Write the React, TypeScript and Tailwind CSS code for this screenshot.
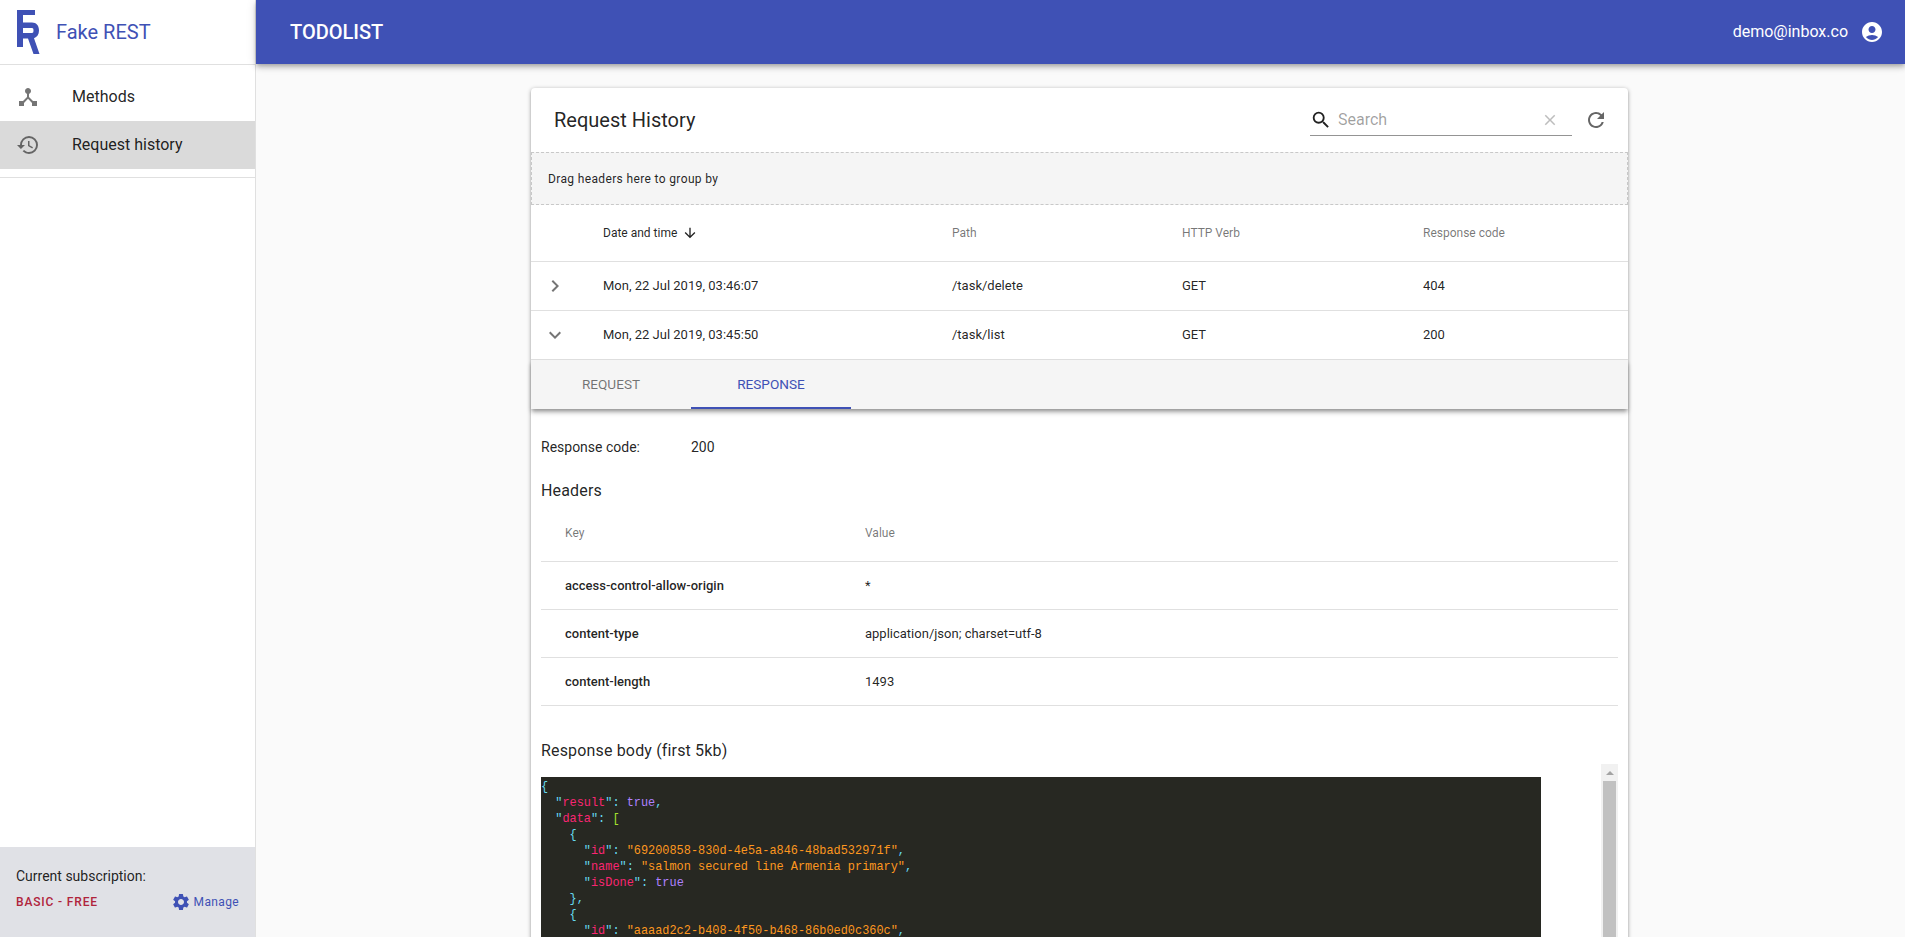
import {
  MdAccountCircle,
  MdArrowDownward,
  MdClose,
  MdDeviceHub,
  MdHistory,
  MdKeyboardArrowDown,
  MdKeyboardArrowRight,
  MdRefresh,
  MdSearch,
  MdSettings,
} from 'react-icons/md';

const gridCols = 'grid grid-cols-[72px_349px_230px_241px_1fr]';

function Logo() {
  return (
    <svg width="24" height="46" viewBox="0 0 24 46" className="shrink-0 text-[#3f51b5]" fill="currentColor">
      <path d="M1 1h18v5H7v32H1z" />
      <path d="M7 13.500h9c4.500 0 7 3.200 7 8 0 3.800-2 6.700-5 7.700L23.500 45h-6l-5.500-15.500H7v-5.500h9c1 0 1.500-.8 1.500-2.500S17 19 16 19H7z" />
    </svg>
  );
}

function Sidebar() {
  return (
    <aside className="flex h-full w-[256px] shrink-0 flex-col border-r border-[#e0e0e0] bg-white">
      <div className="flex h-[65px] items-center gap-[16px] border-b border-[#e0e0e0] pl-[16px]">
        <Logo />
        <span className="text-[20px] text-[#3f51b5]">Fake REST</span>
      </div>
      <nav className="mt-[7px] border-b border-[#e0e0e0] pb-[8px]">
        <div className="flex h-[49px] items-center">
          <MdDeviceHub className="ml-[16px] size-[24px] text-black/54" />
          <span className="ml-[32px] text-[16px] text-black/87">Methods</span>
        </div>
        <div className="flex h-[48px] items-center bg-[#dadada]">
          <MdHistory className="ml-[16px] size-[24px] text-black/54" />
          <span className="ml-[32px] text-[16px] text-black/87">Request history</span>
        </div>
      </nav>
      <div className="mt-auto h-[90px] bg-[#e0e1e6] px-[16px] pt-[20px]">
        <div className="text-[14px] leading-[18px] text-black/87">Current subscription:</div>
        <div className="mt-[7px] flex items-center justify-between">
          <span className="text-[12px] font-medium tracking-[0.07em] text-[#b0243c]">BASIC - FREE</span>
          <span className="flex items-center gap-[3px] text-[12px] tracking-[0.03em] text-[#3f51b5]">
            <MdSettings className="size-[20px]" />
            Manage
          </span>
        </div>
      </div>
    </aside>
  );
}

function TopBar() {
  return (
    <header className="relative z-10 flex h-[64px] shrink-0 items-center justify-between bg-[#3f51b5] pl-[34px] pr-[21px] text-white shadow-[0_2px_4px_-1px_rgba(0,0,0,0.2),0_4px_5px_0_rgba(0,0,0,0.14),0_1px_10px_0_rgba(0,0,0,0.12)]">
      <span className="text-[20px] font-medium">TODOLIST</span>
      <div className="flex items-center gap-[12px]">
        <span className="text-[16px]">demo@inbox.co</span>
        <MdAccountCircle className="size-[24px]" />
      </div>
    </header>
  );
}

function SearchBar() {
  return (
    <div className="flex items-center">
      <div className="flex h-[32px] w-[262px] items-center border-b border-[#949494] pr-[13px]">
        <MdSearch className="size-[22px] text-black/87" />
        <span className="ml-[6px] text-[16px] text-black/38">Search</span>
        <MdClose className="ml-auto size-[18px] text-black/26" />
      </div>
      <MdRefresh className="ml-[12px] size-[24px] text-black/60" />
    </div>
  );
}

function GridHeader() {
  return (
    <div className={`${gridCols} h-[57px] items-center border-b border-[#e0e0e0] text-[12px] text-black/54`}>
      <span />
      <span className="flex items-center gap-[5px] text-black/87">
        Date and time
        <MdArrowDownward className="size-[16px]" />
      </span>
      <span>Path</span>
      <span>HTTP Verb</span>
      <span>Response code</span>
    </div>
  );
}

function GridRow({ open, date, path, code }: { open?: boolean; date: string; path: string; code: string }) {
  const Icon = open ? MdKeyboardArrowDown : MdKeyboardArrowRight;
  return (
    <div className={`${gridCols} h-[49px] items-center border-b border-[#e0e0e0] text-[13px] text-black/87`}>
      <Icon className="ml-[12px] size-[24px] text-black/54" />
      <span>{date}</span>
      <span>{path}</span>
      <span>GET</span>
      <span>{code}</span>
    </div>
  );
}

function Tabs() {
  return (
    <div className="relative flex h-[49px] bg-[#f5f5f5] text-[13.6px] shadow-[0_3px_4px_-1px_rgba(0,0,0,0.35),0_4px_5px_0_rgba(0,0,0,0.14)]">
      <div className="flex w-[160px] items-center justify-center text-black/54">REQUEST</div>
      <div className="flex w-[160px] items-center justify-center border-b-2 border-[#3f51b5] pt-[2px] text-[#3f51b5]">
        RESPONSE
      </div>
    </div>
  );
}

const headerRows = [
  ['access-control-allow-origin', '*'],
  ['content-type', 'application/json; charset=utf-8'],
  ['content-length', '1493'],
];

function HeadersTable() {
  return (
    <div className="mr-[10px] mt-[2px]">
      <div className="grid h-[57px] grid-cols-[300px_1fr] items-center border-b border-[#e0e0e0] pl-[24px] text-[12px] text-black/54">
        <span>Key</span>
        <span>Value</span>
      </div>
      {headerRows.map(([k, v]) => (
        <div
          key={k}
          className="grid h-[48px] grid-cols-[300px_1fr] items-center border-b border-[#e0e0e0] pl-[24px] text-[13px] text-black/87"
        >
          <span className="font-medium">{k}</span>
          <span>{v}</span>
        </div>
      ))}
    </div>
  );
}

const q = 'text-[#66d9ef]';
const pink = 'text-[#f92672]';
const str = 'text-[#fd971f]';
const bool = 'text-[#ae81ff]';

function Key({ name }: { name: string }) {
  return (
    <>
      <span className={q}>"</span>
      <span className={pink}>{name}</span>
      <span className={q}>": </span>
    </>
  );
}

function JsonBody() {
  return (
    <div className="mt-[1px] flex h-[200px] items-start">
      <div className="mt-[13px] h-[300px] w-[1000px] shrink-0 bg-[#272822] pt-[2px] font-['Liberation_Mono',monospace] text-[11.9px] leading-[16px] whitespace-pre">
        <div className={q}>{'{'}</div>
        <div>
          {'  '}
          <Key name="result" />
          <span className={bool}>true</span>
          <span className={q}>,</span>
        </div>
        <div>
          {'  '}
          <Key name="data" />
          <span className="text-[#a6e22e]">[</span>
        </div>
        <div className={q}>{'    {'}</div>
        <div>
          {'      '}
          <Key name="id" />
          <span className={str}>"69200858-830d-4e5a-a846-48bad532971f"</span>
          <span className={q}>,</span>
        </div>
        <div>
          {'      '}
          <Key name="name" />
          <span className={str}>"salmon secured line Armenia primary"</span>
          <span className={q}>,</span>
        </div>
        <div>
          {'      '}
          <Key name="isDone" />
          <span className={bool}>true</span>
        </div>
        <div className={q}>{'    },'}</div>
        <div className={q}>{'    {'}</div>
        <div>
          {'      '}
          <Key name="id" />
          <span className={str}>"aaaad2c2-b408-4f50-b468-86b0ed0c360c"</span>
          <span className={q}>,</span>
        </div>
      </div>
      <div className="ml-auto mr-[10px] flex w-[17px] shrink-0 flex-col self-stretch bg-[#f1f1f1]">
        <div className="flex h-[17px] items-center justify-center">
          <div className="h-0 w-0 border-x-[4px] border-b-[4px] border-x-transparent border-b-[#a3a3a3]" />
        </div>
        <div className="mx-[2px] flex-1 bg-[#c1c1c1]" />
      </div>
    </div>
  );
}

function Card() {
  return (
    <section className="ml-[275px] w-[1097px] rounded-t-[4px] bg-white font-['Roboto',sans-serif] shadow-[0_1px_4px_0_rgba(0,0,0,0.35),0_2px_2px_0_rgba(0,0,0,0.14),0_3px_1px_-2px_rgba(0,0,0,0.12)]">
      <div className="flex h-[64px] items-center justify-between pl-[23px] pr-[20px]">
        <h2 className="text-[20px] text-black/87">Request History</h2>
        <SearchBar />
      </div>
      <div className="flex h-[53px] items-center border border-dashed border-[#c8c8c8] bg-[#f5f5f5] pl-[16px] text-[12px] tracking-[0.03em] text-black/87">
        Drag headers here to group by
      </div>
      <GridHeader />
      <GridRow date="Mon, 22 Jul 2019, 03:46:07" path="/task/delete" code="404" />
      <GridRow open date="Mon, 22 Jul 2019, 03:45:50" path="/task/list" code="200" />
      <Tabs />
      <div className="pl-[10px] pt-[28px]">
        <div className="flex text-[14px] leading-[20px] text-black/87">
          <span className="w-[150px]">Response code:</span>
          <span>200</span>
        </div>
        <h3 className="mt-[22px] text-[16px] leading-[24px] tracking-[0.01em] text-black/87">Headers</h3>
        <HeadersTable />
        <h3 className="mt-[33px] text-[16px] leading-[24px] tracking-[0.01em] text-black/87">
          Response body (first 5kb)
        </h3>
        <JsonBody />
      </div>
    </section>
  );
}

export default function App() {
  return (
    <div className="flex h-screen w-full overflow-hidden bg-[#fafafa] font-['Roboto',sans-serif]">
      <Sidebar />
      <div className="flex min-w-0 flex-1 flex-col">
        <TopBar />
        <main className="flex-1 overflow-hidden pt-[24px]">
          <Card />
        </main>
      </div>
    </div>
  );
}
